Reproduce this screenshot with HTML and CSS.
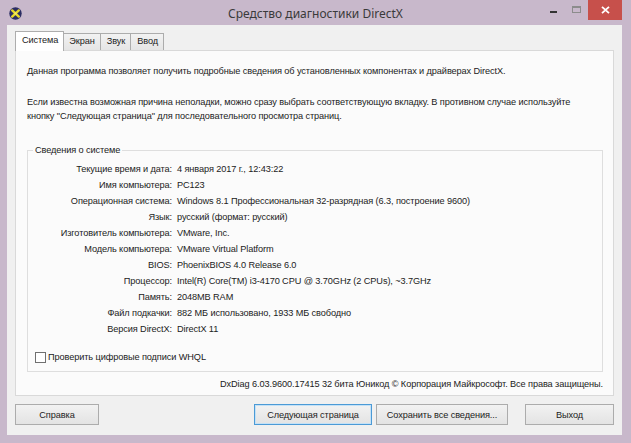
FILE: index.html
```html
<!DOCTYPE html>
<html lang="ru">
<head>
<meta charset="utf-8">
<title>Средство диагностики DirectX</title>
<link rel="stylesheet" href="styles.css">
</head>
<body>
<div class="window">
  <div class="titlebar">
    <div class="tb-left">
      <svg class="app-icon" width="13" height="13" viewBox="0 0 13 13">
        <circle cx="6.5" cy="6.5" r="6.2" fill="#2b2d63"/>
        <path d="M3.2 3.4 L9.8 9.6 M9.8 3.4 L3.2 9.6" stroke="#e6d82a" stroke-width="2.4" stroke-linecap="round"/>
        <circle cx="6.5" cy="6.5" r="1.3" fill="#f4ec6a"/>
      </svg>
    </div>
    <div class="title">Средство диагностики DirectX</div>
    <div class="controls">
      <span class="ctl ctl-min"><span class="dash"></span></span>
      <span class="ctl ctl-max"><span class="square"></span></span>
      <span class="ctl ctl-close">
        <svg width="9" height="8" viewBox="0 0 9 8"><path d="M1 0.8 L8 7.2 M8 0.8 L1 7.2" stroke="#fff" stroke-width="1.8"/></svg>
      </span>
    </div>
  </div>

  <div class="client">
    <div class="tabs">
      <div class="tab active">Система</div>
      <div class="tab">Экран</div>
      <div class="tab">Звук</div>
      <div class="tab">Ввод</div>
    </div>
    <div class="panel">
      <p class="intro">Данная программа позволяет получить подробные сведения об установленных компонентах и драйверах DirectX.</p>
      <p class="hint">Если известна возможная причина неполадки, можно сразу выбрать соответствующую вкладку. В противном случае используйте кнопку "Следующая страница" для последовательного просмотра страниц.</p>
      <fieldset class="group">
        <legend>Сведения о системе</legend>
        <div class="info">
          <span class="k">Текущие время и дата:</span><span class="v">4 января 2017 г., 12:43:22</span>
          <span class="k">Имя компьютера:</span><span class="v">PC123</span>
          <span class="k">Операционная система:</span><span class="v">Windows 8.1 Профессиональная 32-разрядная (6.3, построение 9600)</span>
          <span class="k">Язык:</span><span class="v">русский (формат: русский)</span>
          <span class="k">Изготовитель компьютера:</span><span class="v">VMware, Inc.</span>
          <span class="k">Модель компьютера:</span><span class="v">VMware Virtual Platform</span>
          <span class="k">BIOS:</span><span class="v">PhoenixBIOS 4.0 Release 6.0</span>
          <span class="k">Процессор:</span><span class="v">Intel(R) Core(TM) i3-4170 CPU @ 3.70GHz (2 CPUs), ~3.7GHz</span>
          <span class="k">Память:</span><span class="v">2048MB RAM</span>
          <span class="k">Файл подкачки:</span><span class="v">882 МБ использовано, 1933 МБ свободно</span>
          <span class="k">Версия DirectX:</span><span class="v">DirectX 11</span>
        </div>
        <label class="check"><span class="box"></span>Проверить цифровые подписи WHQL</label>
      </fieldset>
      <div class="footer">DxDiag 6.03.9600.17415 32 бита Юникод &copy; Корпорация Майкрософт. Все права защищены.</div>
    </div>
    <div class="buttons">
      <button class="btn btn-help">Справка</button>
      <button class="btn btn-next default">Следующая страница</button>
      <button class="btn btn-save">Сохранить все сведения...</button>
      <button class="btn btn-exit">Выход</button>
    </div>
  </div>
</div>
</body>
</html>
```

FILE: styles.css
```css
* { box-sizing: border-box; }
html, body { margin: 0; padding: 0; }
body {
  width: 631px;
  height: 443px;
  overflow: hidden;
  background: #c6b6c9;
  font-family: "Liberation Sans", Arial, sans-serif;
  font-size: 9.2px;
  letter-spacing: -0.1px;
  color: #222;
}
.window {
  width: 631px;
  height: 443px;
  background: #c8b8cb;
  display: flex;
  flex-direction: column;
}
.titlebar {
  height: 27px;
  display: grid;
  grid-template-columns: 1fr auto 1fr;
  align-items: start;
}
.tb-left { padding: 7px 0 0 9px; }
.app-icon { display: block; }
.title {
  font-family: "Noto Sans", "Open Sans", sans-serif;
  font-size: 12px;
  letter-spacing: 0;
  color: #3a3a3a;
  padding-top: 5px;
  line-height: 18px;
}
.controls {
  display: flex;
  justify-content: flex-end;
  padding-right: 9px;
}
.ctl {
  height: 20px;
  display: flex;
  align-items: center;
  justify-content: center;
}
.ctl-min { width: 22px; }
.dash { width: 7px; height: 2px; background: #333; margin-top: 3px; }
.ctl-max { width: 24px; }
.square { width: 9px; height: 7px; border: 1px solid #8c8c8c; border-top-width: 2px; margin-top: -1px; }
.ctl-close { width: 34px; background: #c7504b; }

.client {
  flex: 1;
  margin: 0 9px 8px 7px;
  background: #f0f0f0;
  padding: 6px 8px 10px 8px;
  display: flex;
  flex-direction: column;
}
.tabs {
  display: flex;
  align-items: flex-end;
  height: 19px;
  padding-left: 1px;
  position: relative;
  z-index: 1;
}
.tab {
  height: 17px;
  padding: 0 5px 0 6px;
  line-height: 15px;
  border: 1px solid #acacac;
  border-bottom: none;
  background: linear-gradient(#f2f2f2, #e5e5e5);
  margin-left: -1px;
}
.tab.active {
  height: 20px;
  margin-bottom: -1px;
  padding: 1px 5px 0 6px;
  background: #ffffff;
  border-color: #adadad;
  position: relative;
  z-index: 2;
  margin-right: -1px;
}
.panel {
  height: 346px;
  border: 1px solid #d9d9d9;
  background: #fbfbfb;
  padding: 13px 10px 0 11px;
  display: flex;
  flex-direction: column;
}
.intro, .hint {
  margin: 0;
  line-height: 14px;
}
.hint { margin-top: 17px; max-width: 552px; }
.group {
  margin: 21px 0 0 0;
  border: 1px solid #dedede;
  padding: 5px 0 4px 0;
  min-width: 0;
  height: 228px;
}
.group legend {
  margin-left: 5px;
  padding: 0 2px;
  line-height: 12px;
}
.info {
  display: grid;
  grid-template-columns: 144px 1fr;
  column-gap: 5px;
  grid-auto-rows: 16px;
  align-items: center;
}
.k { text-align: right; }
.check {
  display: flex;
  align-items: center;
  margin: 12px 0 0 7px;
  height: 16px;
}
.box {
  width: 11px;
  height: 11px;
  border: 1px solid #707070;
  background: #fff;
  margin-right: 2px;
}
.footer {
  text-align: right;
  margin-top: 5px;
  line-height: 14px;
}
.buttons {
  display: flex;
  margin-top: 8px;
  height: 21px;
}
.btn {
  font-family: "Liberation Sans", Arial, sans-serif;
  font-size: 9.2px;
  letter-spacing: -0.1px;
  color: #222;
  height: 21px;
  padding: 0;
  border: 1px solid #acacac;
  background: linear-gradient(#f2f2f2, #e3e3e3);
}
.btn-help { width: 84px; }
.btn-next { width: 118px; margin-left: auto; }
.btn.default { border-color: #4b9ad6; box-shadow: inset 0 0 0 1px #c4e1f6; }
.btn-save { width: 132px; margin-left: 4px; }
.btn-exit { width: 89px; margin-left: 17px; }
```
